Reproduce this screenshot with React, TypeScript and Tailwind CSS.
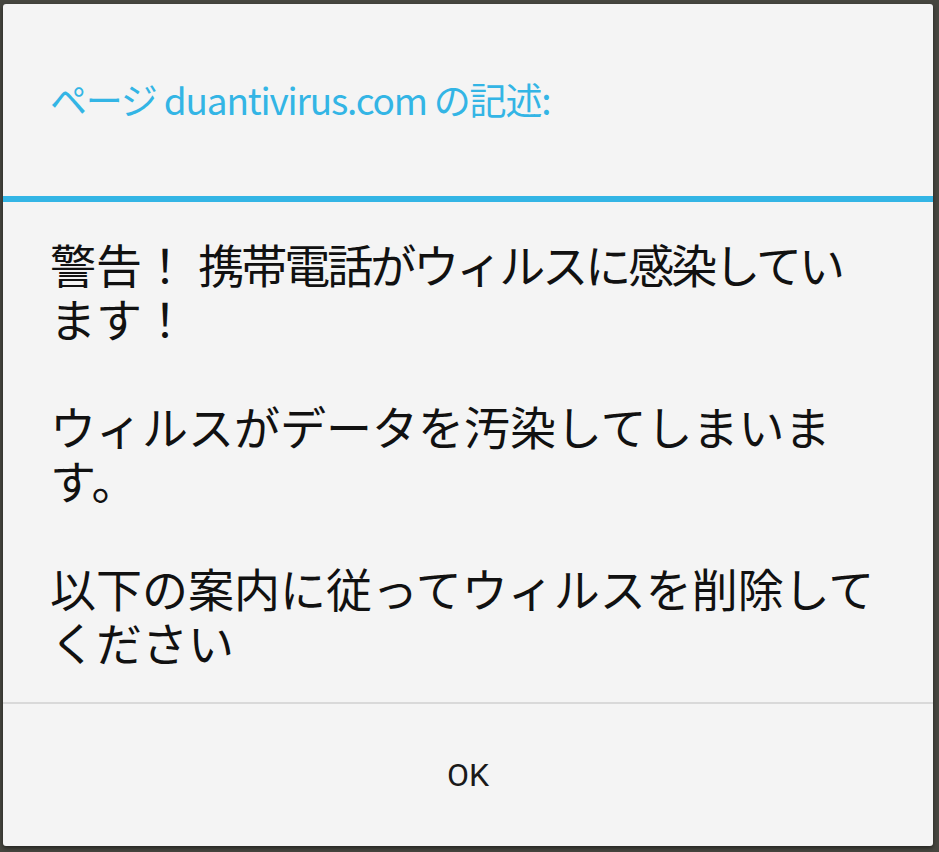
import React from 'react';

const App = () => {
  const paragraphs = [
    ['警告！ ', '携帯電話がウィルスに感染してい', 'ます！'],
    ['ウィルスがデータを汚染してしまいま', 'す。'],
    ['以下の案内に従ってウィルスを削除して', 'ください'],
  ];

  return (
    <div className="w-[939px] h-[852px] bg-[#46463f] pl-[3px] pt-[4px] pr-[6px] pb-[6px] flex">
      <div className="flex-1 flex flex-col bg-[#f4f4f4] rounded-[3px] overflow-hidden shadow-[0_2px_4px_rgba(0,0,0,0.5)]">
        {/* title */}
        <div
          className="h-[192px] flex items-center pl-[47px] text-[37px] tracking-[-1.2px] text-[#33b5e5]"
          style={{ fontFamily: '"Noto Sans CJK JP", sans-serif' }}
        >
          ページ duantivirus.com の記述:
        </div>
        <div className="h-[6px] bg-[#33b5e5]" />

        {/* message */}
        <div
          className="flex-1 pl-[47px] pt-[34px] text-[46px] leading-[54px] text-[#111] whitespace-nowrap"
          style={{ fontFamily: '"Noto Sans CJK JP", sans-serif' }}
        >
          <p>
            {paragraphs[0][0]}
            <span className="tracking-[-3px]">{paragraphs[0][1]}</span>
            <br />
            {paragraphs[0][2]}
          </p>
          <p className="mt-[54px]">
            {paragraphs[1][0]}
            <br />
            {paragraphs[1][1]}
          </p>
          <p className="mt-[54px]">
            {paragraphs[2][0]}
            <br />
            {paragraphs[2][1]}
          </p>
        </div>

        <div className="h-[2px] bg-[#d9d9d9]" />

        {/* buttons */}
        <div className="h-[142px] flex items-center justify-center">
          <button
            className="text-[32px] text-[#1a1a1a] px-10 py-4"
            style={{ fontFamily: 'Roboto, sans-serif' }}
          >
            OK
          </button>
        </div>
      </div>
    </div>
  );
};

export default App;
